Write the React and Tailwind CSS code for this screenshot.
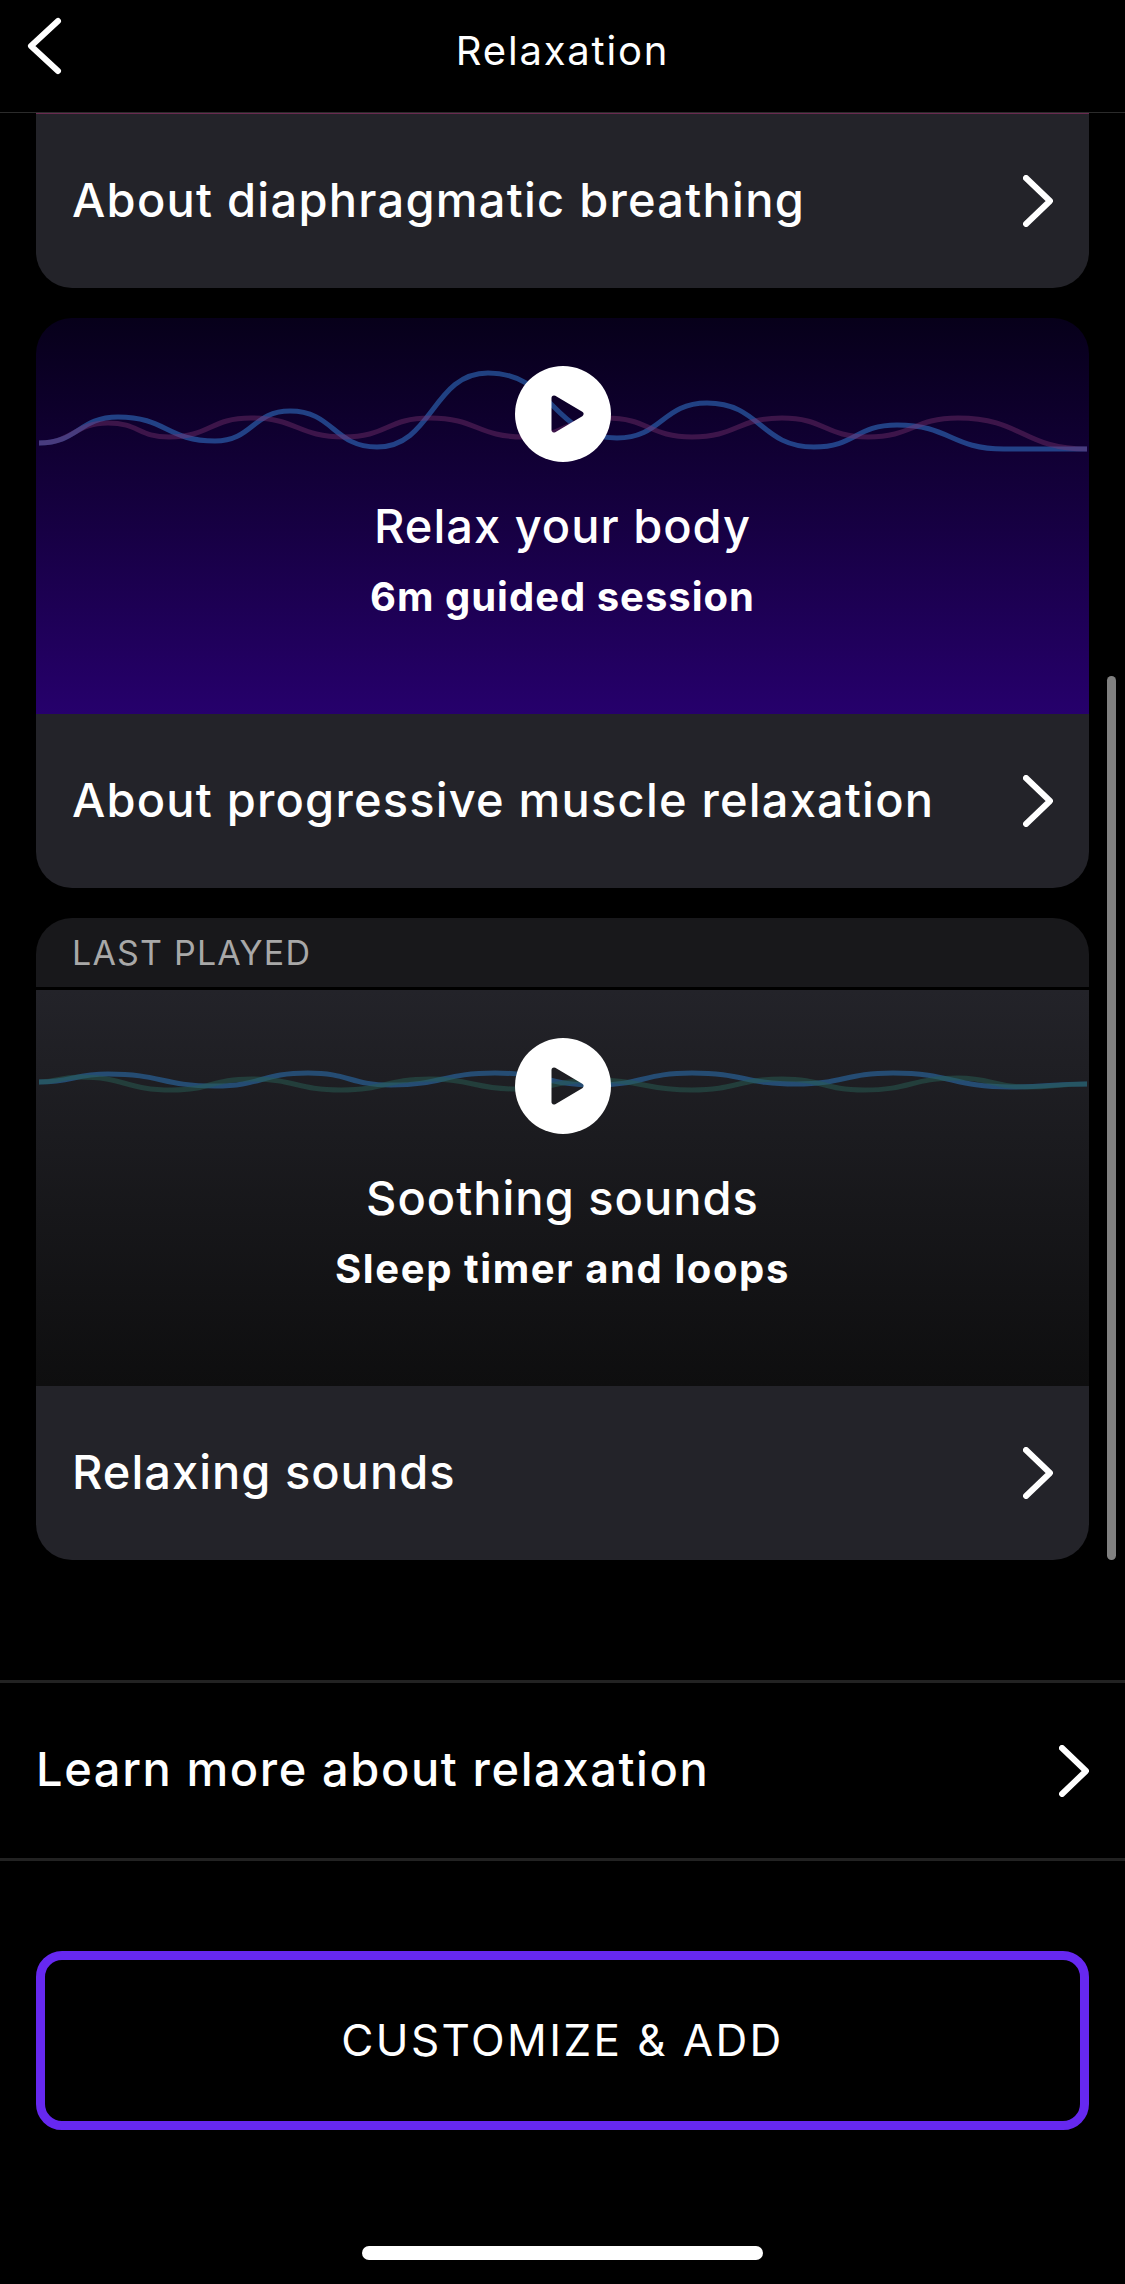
const FONT = "font-['Inter','Liberation_Sans',sans-serif]";

function wavePath(points) {
  let d = `M${points[0][0]} ${points[0][1]}`;
  for (let i = 1; i < points.length; i++) {
    const [x0, y0] = points[i - 1];
    const [x1, y1] = points[i];
    const mx = (x0 + x1) / 2;
    d += ` C${mx} ${y0} ${mx} ${y1} ${x1} ${y1}`;
  }
  return d;
}

const off = (pts, top) => pts.map(([x, y]) => [x - 36, y - top]);

const blue1 = off([[39,443],[118,417],[215,441],[290,411],[377,447],[488,373],[617,438],[707,403],[814,447],[897,425],[1004,449],[1087,449]], 318);
const pink1 = off([[39,443],[108,423],[169,437],[251,418],[344,437],[430,418],[524,437],[606,418],[692,437],[782,418],[868,437],[958,418],[1087,449]], 318);
const blue2 = off([[39,1082],[108,1074],[215,1086],[308,1073],[391,1085],[495,1073],[595,1085],[692,1073],[796,1084],[893,1073],[1011,1087],[1087,1084]], 990);
const green2 = off([[39,1082],[79,1077],[172,1090],[251,1079],[341,1090],[430,1079],[516,1089],[595,1080],[692,1090],[782,1079],[864,1090],[958,1078],[1026,1087],[1087,1084]], 990);

function Chevron() {
  return (
    <svg width="30" height="52" viewBox="0 0 30 52" fill="none" className="block">
      <path d="M3 3 L27 26 L3 49" stroke="#fff" strokeWidth="6" strokeLinecap="round" strokeLinejoin="round" />
    </svg>
  );
}

function PlayButton({ id }) {
  return (
    <svg width="96" height="96" viewBox="0 0 96 96" className="block">
      <mask id={id}>
        <rect width="96" height="96" fill="#fff" />
        <path d="M39 32 L66 48 L39 64 Z" fill="#000" stroke="#000" strokeWidth="5" strokeLinejoin="round" />
      </mask>
      <circle cx="48" cy="48" r="48" fill="#fff" mask={`url(#${id})`} />
    </svg>
  );
}

function Row({ label, tracking }) {
  return (
    <div className="flex h-[174px] items-center justify-between bg-[#232329] px-[36px]">
      <span className={`-mt-[2px] text-[47px] font-medium text-white ${tracking}`}>{label}</span>
      <Chevron />
    </div>
  );
}

function Session({ id, gradient, waveA, waveB, colorA, colorB, opacityA, opacityB, title, subtitle, subtitleTracking }) {
  return (
    <div className={`relative flex h-[396px] flex-col items-center pt-[48px] ${gradient}`}>
      <svg width="1053" height="396" viewBox="0 0 1053 396" fill="none" className="absolute left-0 top-0">
        <path d={wavePath(waveA)} stroke={colorA} strokeOpacity={opacityA} strokeWidth="5" />
        <path d={wavePath(waveB)} stroke={colorB} strokeOpacity={opacityB} strokeWidth="5" />
      </svg>
      <div className="relative">
        <PlayButton id={id} />
      </div>
      <div className="relative mt-[37px] text-[47px] font-medium leading-[54px] tracking-[1px] text-white">{title}</div>
      <div className={`relative mt-[21px] text-[40px] font-bold leading-[46px] text-white ${subtitleTracking}`}>{subtitle}</div>
    </div>
  );
}

export default function App() {
  return (
    <div className={`relative h-[2284px] w-[1125px] overflow-hidden bg-black ${FONT}`}>
      <header className="relative flex h-[113px] items-start justify-center border-b border-[#2b2b2b]">
        <svg width="40" height="62" viewBox="0 0 40 62" fill="none" className="absolute left-[25px] top-[15px]">
          <path d="M33 6 L6 31 L33 56" stroke="#fff" strokeWidth="6" strokeLinecap="round" strokeLinejoin="round" />
        </svg>
        <h1 className="mt-[28px] text-[40px] font-normal leading-[46px] tracking-[1.8px] text-white">Relaxation</h1>
      </header>

      <div className="mx-[36px] flex flex-col">
        <div className="-mt-px overflow-hidden rounded-b-[36px] border-t-2 border-[#6a2a50]">
          <Row label="About diaphragmatic breathing" tracking="tracking-[1.25px]" />
        </div>

        <div className="mt-[30px] overflow-hidden rounded-[36px]">
          <Session
            id="play-a"
            gradient="bg-gradient-to-b from-[#07001a] to-[#26006c]"
            waveA={blue1}
            waveB={pink1}
            colorA="#2e6cc0"
            colorB="#823472"
            opacityA={0.6}
            opacityB={0.4}
            title="Relax your body"
            subtitle="6m guided session"
            subtitleTracking="tracking-[1px]"
          />
          <Row label="About progressive muscle relaxation" tracking="tracking-[1.2px]" />
        </div>

        <div className="mt-[30px] overflow-hidden rounded-[36px]">
          <div className="flex h-[69px] items-center bg-[#18181b] px-[36px]">
            <span className="text-[34px] tracking-[1.2px] text-[#a8a8a8]">LAST PLAYED</span>
          </div>
          <div className="h-[3px] bg-black" />
          <Session
            id="play-b"
            gradient="bg-gradient-to-b from-[#232329] to-[#0e0e0f]"
            waveA={blue2}
            waveB={green2}
            colorA="#296ba8"
            colorB="#285d53"
            opacityA={0.6}
            opacityB={0.5}
            title="Soothing sounds"
            subtitle="Sleep timer and loops"
            subtitleTracking="tracking-[1.6px]"
          />
          <Row label="Relaxing sounds" tracking="tracking-[1px]" />
        </div>
      </div>

      <div className="mt-[120px] flex h-[181px] items-center justify-between border-y-[3px] border-[#222222] px-[36px]">
        <span className="-mt-[2px] text-[47px] font-medium tracking-[1.6px] text-white">Learn more about relaxation</span>
        <Chevron />
      </div>

      <div className="mx-[36px] mt-[90px] flex h-[179px] items-center justify-center rounded-[26px] border-[9px] border-[#6628f0]">
        <span className="-mt-[2px] text-[44px] tracking-[2.4px] text-white">CUSTOMIZE &amp; ADD</span>
      </div>

      <div className="mx-auto mt-[116px] h-[14px] w-[401px] rounded-full bg-white" />

      <div className="absolute left-[1107px] top-[676px] h-[884px] w-[9px] rounded-full bg-[#808080]" />
    </div>
  );
}
